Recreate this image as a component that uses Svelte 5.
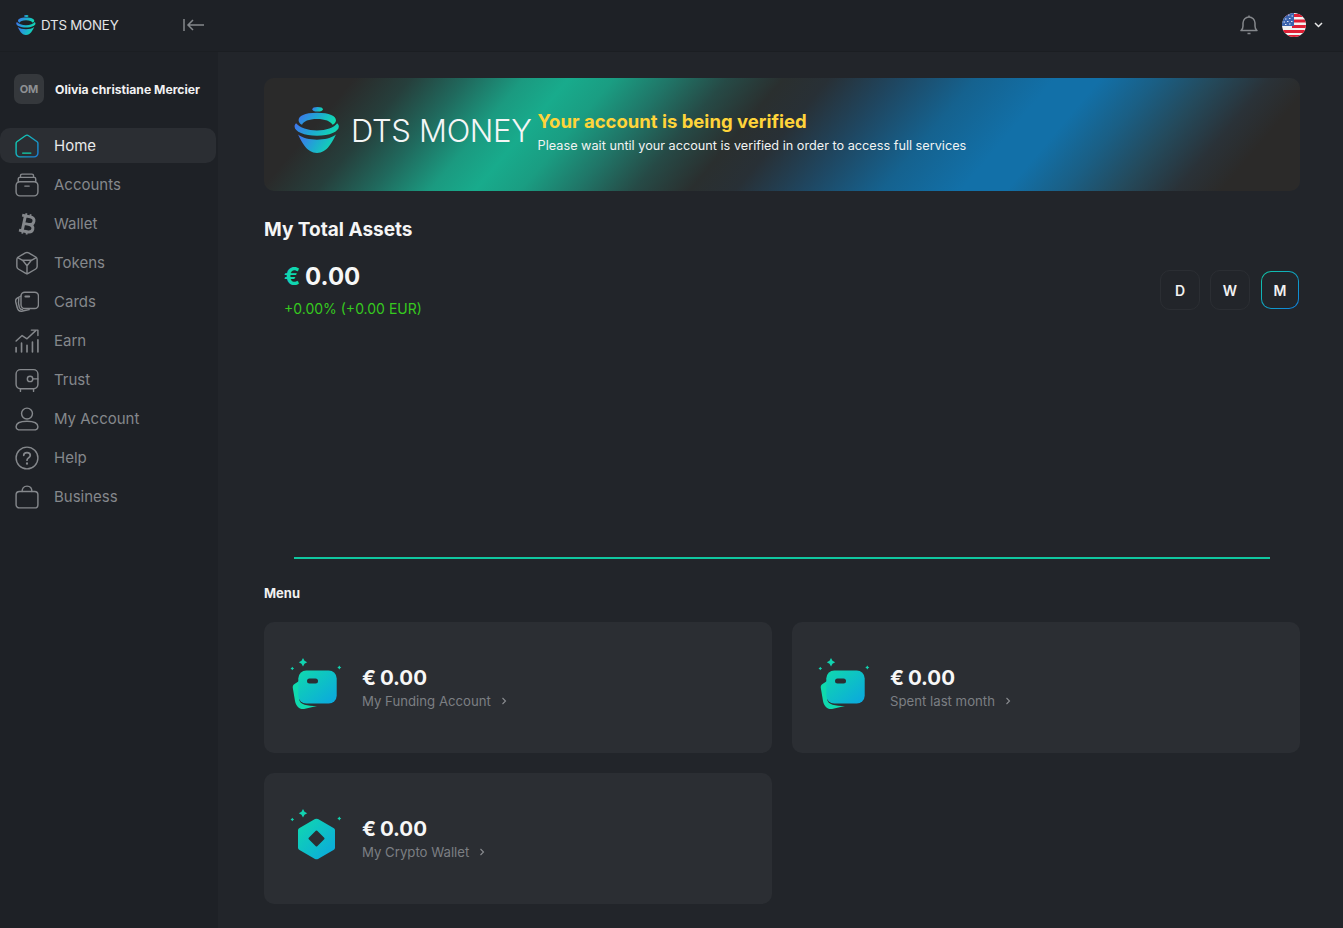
<script lang="ts">
  const nav = ['Home', 'Accounts', 'Wallet', 'Tokens', 'Cards', 'Earn', 'Trust', 'My Account', 'Help', 'Business'];
  const menu = [
    { id: 'funding', amount: '0.00', label: 'My Funding Account', kind: 'card' },
    { id: 'spent', amount: '0.00', label: 'Spent last month', kind: 'card' },
    { id: 'crypto', amount: '0.00', label: 'My Crypto Wallet', kind: 'hex' }
  ];
  const ranges = ['D', 'W', 'M'];
  let range = $state('M');
</script>

{#snippet logo(size)}
  <svg width={size} height={size} viewBox="0 0 40 40" fill="none" aria-hidden="true">
    <ellipse cx="20.500" cy="2" rx="4.500" ry="2" fill="url(#logoGrad)" />
    <path d="M20 5C9 5 4 8 4 11.500c0 1.500 1 3 3 4 1-3 6-5 13-5s12 2 13.500 5c2-1 3-2.500 3-4C36.500 8 31 5 20 5z" fill="url(#logoGrad)" />
    <path d="M.500 17c0-1 .4-2 1.300-2.800C5 18 12 20.500 20 20.500s15-2.500 17.500-6.300c.9.800 1.500 1.800 1.500 2.800 0 4.500-8 8-19 8S.500 21.500.500 17z" fill="url(#logoGrad)" />
    <path d="M3.500 24c4 3 10 4.500 16.500 4.500S32.500 27 36.500 24C33.500 30 29 40 20 40S6.500 30 3.500 24z" fill="url(#logoGrad)" />
  </svg>
{/snippet}

{#snippet sparkles()}
  <path d="M13 -1l1.500 2.700L17.200 3.200 14.500 4.700 13 7.400l-1.500-2.700L8.800 3.200l2.700-1.500z" fill="#11d3b0" />
  <path d="M2.300 7.700l.7 1.100 1.100.7-1.100.7-.7 1.100-.7-1.100-1.100-.7 1.100-.7z" fill="#11d3b0" />
  <path d="M49.300 6.500l.8 1.200 1.200.8-1.200.8-.8 1.200-.8-1.200-1.200-.8 1.200-.8z" fill="#11d3b0" />
{/snippet}

{#snippet navIcon(name)}
  <svg class="nav-icon" width="24" height="24" viewBox="1 1 22 22" fill="none" stroke={name === 'Home' ? 'url(#homeGrad)' : 'currentColor'} stroke-width="1.300" stroke-linecap="round" stroke-linejoin="round" aria-hidden="true">
    {#if name === 'Home'}
      <path d="M2 9.500c0-.6.300-1.100.7-1.400L10.500 2.600a2.500 2.500 0 0 1 3 0l7.800 5.500c.4.300.7.800.7 1.400v9a3.500 3.500 0 0 1-3.500 3.500h-13A3.500 3.500 0 0 1 2 18.500z" />
      <path d="M8 18.500h7.500" stroke="#11d3b0" />
    {:else if name === 'Accounts'}
      <rect x="2" y="9" width="20" height="13" rx="3.500" />
      <path d="M4 9V6.500A1.500 1.500 0 0 1 5.500 5h13A1.500 1.500 0 0 1 20 6.500V9" />
      <path d="M6 5V3.500A1.500 1.500 0 0 1 7.500 2h9A1.500 1.500 0 0 1 18 3.500V5" />
      <path d="M10 13h4" />
    {:else if name === 'Wallet'}
      <g transform="rotate(12 12 12)" stroke-linecap="butt">
        <path d="M9.500 2.500v3M13.500 2.500v3M9.500 18.500v3M13.500 18.500v3" stroke-width="1.700" />
        <path d="M6 5h7.500c2.800 0 4.200 1.400 4.200 3.400S16.300 12 13.500 12H9M13.500 12c3 0 4.700 1.500 4.700 3.500S16.500 19 13.500 19H6M9 5v14" stroke-width="2.700" />
      </g>
    {:else if name === 'Tokens'}
      <path d="M10.500 2.800a3 3 0 0 1 3 0l6.500 3.700a2.500 2.500 0 0 1 1.300 2.200v6.600a2.500 2.500 0 0 1-1.300 2.200l-6.500 3.700a3 3 0 0 1-3 0L4 17.500a2.500 2.500 0 0 1-1.300-2.200V8.700A2.500 2.500 0 0 1 4 6.500z" />
      <path d="M8 9.500h8L12 14.500zM3.500 7 8 9.500M20.500 7 16 9.500M12 14.500V22" />
    {:else if name === 'Cards'}
      <rect x="6.500" y="3" width="16" height="15" rx="3.500" />
      <path d="M10.500 7h3.500" stroke-width="1.800" />
      <path d="M6.500 6.500 3 8.500c-1.300.8-1.700 2-1.300 3.500l1.300 5c.6 2.500 2.500 3.800 5 3.300l6-1.300" />
      <path d="M4.500 8.500c-.6 3-.3 6 .5 8.500.5 1.300 1.500 2 3 2" />
    {:else if name === 'Earn'}
      <path d="M2 12l5.500-5 4.500 3 8-7.500" />
      <path d="M16 2h6v5" />
      <path d="M2 22v-4M7 22v-8M12 22v-6M17 22v-9M22 22v-11" stroke-width="1.500" />
    {:else if name === 'Trust'}
      <rect x="2" y="2.500" width="20" height="17.500" rx="4" />
      <circle cx="14.800" cy="11" r="2.500" />
      <path d="M17.300 11H22M6 20v2.500M18 20v2.500" />
    {:else if name === 'My Account'}
      <circle cx="12" cy="7" r="5" />
      <path d="M2 19c0-3 3-5 10-5s10 2 10 5c0 2-1.500 3-4 3H6c-2.500 0-4-1-4-3z" />
    {:else if name === 'Help'}
      <circle cx="12" cy="12" r="10" />
      <path d="M9 9.500C9 7.800 10.300 7 12 7s3 1 3 2.500c0 2.300-3 2.500-3 4.500" stroke-width="1.600" />
      <path d="M12 17v.2" stroke-width="2" />
    {:else}
      <rect x="2" y="7" width="20" height="15" rx="3" />
      <path d="M7.500 7c0-3 1.500-5 4.500-5s4.500 2 4.500 5" />
    {/if}
  </svg>
{/snippet}

<svg class="defs" width="0" height="0" aria-hidden="true">
  <defs>
    <linearGradient id="logoGrad" x1="0" y1="0.300" x2="1" y2="0.600">
      <stop offset="0" stop-color="#3d78ea" />
      <stop offset="0.450" stop-color="#1fa8d2" />
      <stop offset="1" stop-color="#0fdcae" />
    </linearGradient>
    <linearGradient id="homeGrad" gradientUnits="userSpaceOnUse" x1="2" y1="4" x2="22" y2="20">
      <stop offset="0" stop-color="#11d3b0" />
      <stop offset="1" stop-color="#1a7fd4" />
    </linearGradient>
    <linearGradient id="tileGrad" x1="0" y1="0" x2="1" y2="1">
      <stop offset="0" stop-color="#10d9ae" />
      <stop offset="1" stop-color="#0ba6e0" />
    </linearGradient>
  </defs>
</svg>

<div class="shell">
  <header class="topbar">
    <div class="brand">
      {@render logo(20)}
      <span class="brand-name">DTS MONEY</span>
    </div>
    <button class="collapse" aria-label="Collapse sidebar">
      <svg width="22" height="12" viewBox="0 0 22 12" fill="none" stroke="#85888c" stroke-width="1.500">
        <path d="M1 0v12M21 6H5M10 1 5 6l5 5" />
      </svg>
    </button>
    <div class="top-actions">
      <svg width="18" height="20" viewBox="0 0 18 20" fill="none" stroke="#85888c" stroke-width="1.500" stroke-linejoin="round" aria-label="Notifications">
        <path d="M1 15.500h16c-1.500-1-2-2.500-2-4.500V8a6 6 0 0 0-12 0v3c0 2-.5 3.500-2 4.500z" />
        <path d="M9 .500V2M7.500 18.500h3" />
      </svg>
      <svg class="flag" width="24" height="24" viewBox="0 0 24 24" aria-label="English">
        <clipPath id="flagClip"><circle cx="12" cy="12" r="12" /></clipPath>
        <g clip-path="url(#flagClip)">
          <rect width="24" height="24" fill="#f2f2f2" />
          <path d="M0 1h24v3H0zM10 6.500h14v3H10zM10 12h14v3H10zM0 17h24v3H0zM0 22h24v3H0z" fill="#df1f35" />
          <rect width="12" height="13" fill="#3b63ad" />
          <path d="M2 3h1.500M6 2h1.500M9.500 3H11M3 6h1.500M7 5.500h1.500M1.500 9H3M5 8.500h1.500M9 8.500h1.500M3 11.500h1.500M7 11h1.500" stroke="#dfe6f5" stroke-width="1.200" />
        </g>
      </svg>
      <svg width="9" height="6" viewBox="0 0 9 6" fill="none" stroke="#e8e8e8" stroke-width="1.500">
        <path d="M1 1l3.500 3.500L8 1" />
      </svg>
    </div>
  </header>

  <div class="body">
    <aside class="sidebar">
      <div class="user">
        <span class="avatar">OM</span>
        <span class="user-name">Olivia christiane Mercier</span>
      </div>
      <nav>
        {#each nav as item, i}
          <a href="#top" class="nav-item" class:active={i === 0}>
            {@render navIcon(item)}
            <span>{item}</span>
          </a>
        {/each}
      </nav>
    </aside>

    <main class="content">
      <section class="banner">
        {@render logo(46)}
        <span class="banner-brand">DTS MONEY</span>
        <div class="banner-text">
          <strong>Your account is being verified</strong>
          <span>Please wait until your account is verified in order to access full services</span>
        </div>
      </section>

      <h1>My Total Assets</h1>

      <section class="assets">
        <div class="assets-head">
          <div>
            <div class="total"><span class="euro">€</span> 0.00</div>
            <div class="change">+0.00% (+0.00 EUR)</div>
          </div>
          <div class="ranges">
            {#each ranges as r}
              <button class="range" class:active={range === r} onclick={() => (range = r)}>{r}</button>
            {/each}
          </div>
        </div>
        <div class="chart"></div>
      </section>

      <h2>Menu</h2>

      <section class="menu">
        {#each menu as m}
          <article class="tile">
            <svg class="tile-icon" width="54" height="54" viewBox="0 0 54 54" fill="none" aria-hidden="true">
              {@render sparkles()}
              {#if m.kind === 'card'}
                <path d="M9 22 4.500 25C3 26 2.500 27.500 2.800 29L5 42c1 5 4 8.500 9 8l13-3c-10 0-17-1-18-7z" fill="#10d9ae" />
                <rect x="8.300" y="11.500" width="38.400" height="33" rx="8" fill="url(#tileGrad)" />
                <rect x="17" y="19.500" width="11" height="5" rx="2.500" fill="#2b2e33" />
              {:else}
                <path d="M25 9a3.500 3.500 0 0 1 3 0l15.500 9c1 .6 1.500 1.500 1.500 2.500v17c0 1-.5 2-1.500 2.500L28 49a3.500 3.500 0 0 1-3 0L9.500 40C8.500 39.500 8 38.500 8 37.500v-17c0-1 .5-1.900 1.500-2.500z" fill="url(#tileGrad)" />
                <path d="M26.500 21.500l7 7-7 7-7-7z" fill="#2b2e33" stroke="#2b2e33" stroke-width="2" stroke-linejoin="round" />
              {/if}
            </svg>
            <div class="tile-text">
              <div class="tile-amount">€ {m.amount}</div>
              <div class="tile-label">
                {m.label}
                <svg width="6" height="8" viewBox="0 0 6 8" fill="none" stroke="#8a8c90" stroke-width="1.100"><path d="M1.500 1l3 3-3 3" /></svg>
              </div>
            </div>
          </article>
        {/each}
      </section>
    </main>
  </div>
</div>

<style>
  :global(body) {
    background: #22252a;
    font-family: Inter, 'Noto Sans', sans-serif;
  }

  .defs {
    position: absolute;
  }

  .shell {
    height: 928px;
    overflow: hidden;
    display: flex;
    flex-direction: column;
  }

  .topbar {
    flex: 0 0 52px;
    box-sizing: border-box;
    display: flex;
    align-items: center;
    padding: 0 20px 2px 16px;
    background: #1e2126;
    border-bottom: 1px solid #1b1e22;
  }

  .brand {
    display: flex;
    align-items: center;
    gap: 5px;
    width: 167px;
  }

  .brand-name {
    font-size: 13.300px;
    color: #e4e5e6;
    letter-spacing: -0.2px;
  }

  .collapse {
    background: none;
    border: none;
    padding: 0;
    display: flex;
  }

  .top-actions {
    margin-left: auto;
    display: flex;
    align-items: center;
  }

  .flag {
    margin: 0 8px 0 24px;
  }

  .body {
    flex: 1;
    display: flex;
    min-height: 0;
  }

  .sidebar {
    flex: 0 0 218px;
    box-sizing: border-box;
    background: #1e2126;
    padding-top: 22px;
    padding-right: 2px;
  }

  .user {
    display: flex;
    align-items: center;
    gap: 11px;
    padding-left: 14px;
    height: 30px;
    margin-bottom: 24px;
  }

  .avatar {
    width: 30px;
    height: 30px;
    border-radius: 7px;
    background: #35383c;
    color: #8e9093;
    font-size: 11px;
    font-weight: 700;
    display: grid;
    place-items: center;
  }

  .user-name {
    font-size: 12.200px;
    font-weight: 700;
    color: #f1f1f2;
  }

  nav {
    display: flex;
    flex-direction: column;
    gap: 4px;
  }

  .nav-item {
    height: 35px;
    display: flex;
    align-items: center;
    gap: 15px;
    padding-left: 15px;
    border-radius: 10px;
    font-size: 15px;
    color: #85888c;
    text-decoration: none;
  }

  .nav-item.active {
    background: #2b2e33;
    color: #e8e9ea;
  }

  .nav-icon {
    flex: none;
  }

  .content {
    flex: 1;
    min-width: 0;
    padding: 26px 43px 0 46px;
  }

  .banner {
    height: 113px;
    border-radius: 10px;
    display: flex;
    align-items: center;
    padding: 0 0 9px 30px;
    box-sizing: border-box;
    background: linear-gradient(
      130deg,
      #2a2a2a 8%,
      #263f3c 13%,
      #20695d 18%,
      #1b9a80 23%,
      #18ab8c 27%,
      #1a9d82 31%,
      #207567 36%,
      #264a46 41%,
      #2a2f2f 46%,
      #283036 50%,
      #1f4660 56%,
      #15628f 63%,
      #1270a8 70%,
      #1270a8 74%,
      #1a5f85 79%,
      #244a5c 84%,
      #2a3238 89%,
      #2b2a29 93%
    );
  }

  .banner-brand {
    margin-left: 11px;
    font-size: 31px;
    color: #f4f6f6;
    font-weight: 300;
    letter-spacing: -0.3px;
    white-space: nowrap;
  }

  .banner-text {
    margin-left: 6px;
    display: flex;
    flex-direction: column;
    gap: 5px;
    padding-top: 2px;
  }

  .banner-text strong {
    font-size: 18.500px;
    line-height: 24px;
    font-weight: 700;
    color: #ffd43a;
  }

  .banner-text span {
    font-size: 12.700px;
    line-height: 16px;
    color: #f1f3f3;
  }

  h1 {
    margin: 27px 0 0;
    font-size: 19px;
    line-height: 24px;
    font-weight: 700;
    color: #f5f5f5;
  }

  .assets {
    padding: 0 1px 0 20px;
  }

  .assets-head {
    display: flex;
    justify-content: space-between;
    padding-top: 20px;
  }

  .total {
    font-size: 24px;
    line-height: 30px;
    font-weight: 700;
    color: #f7f7f7;
    word-spacing: -1px;
  }

  .euro {
    color: #10d6b0;
  }

  .change {
    margin-top: 8px;
    font-size: 14px;
    line-height: 18px;
    color: #36c91f;
  }

  .ranges {
    display: flex;
    align-items: center;
    gap: 10px;
    padding-top: 8px;
    height: 40px;
  }

  .range {
    width: 40px;
    height: 40px;
    border-radius: 10px;
    background: #22252a;
    border: 1px solid #2b2e33;
    color: #f1f1f1;
    font-family: inherit;
    font-size: 14px;
    font-weight: 600;
    padding: 0;
  }

  .range.active {
    width: 38px;
    height: 38px;
    margin-left: 1px;
    border: 1px solid transparent;
    background:
      linear-gradient(#22252a, #22252a) padding-box,
      linear-gradient(135deg, #11c9a6, #0f7fe0) border-box;
  }

  .chart {
    height: 2px;
    margin: 239px 29px 0 10px;
    background: #10c7a0;
  }

  h2 {
    margin: 26px 0 0;
    font-size: 13px;
    line-height: 16px;
    font-weight: 700;
    color: #f1f1f1;
  }

  .menu {
    margin-top: 21px;
    display: grid;
    grid-template-columns: 1fr 1fr;
    gap: 20px;
  }

  .tile {
    height: 131px;
    box-sizing: border-box;
    padding-left: 26px;
    border-radius: 10px;
    background: #2b2e33;
    display: flex;
    align-items: center;
    gap: 18px;
  }

  .tile-icon {
    flex: none;
    overflow: visible;
    margin-top: -4px;
  }

  .tile-amount {
    font-size: 20.500px;
    line-height: 24px;
    font-weight: 700;
    color: #f7f7f7;
    word-spacing: -1px;
  }

  .tile-label {
    margin-top: 3px;
    font-size: 13.200px;
    line-height: 16px;
    color: #7c7f83;
    display: flex;
    align-items: center;
    gap: 10px;
  }
</style>
